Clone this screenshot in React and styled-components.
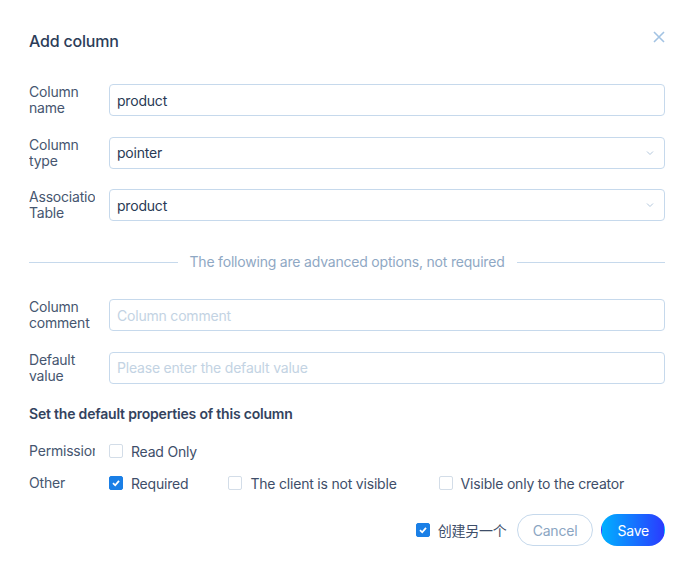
import React from "react";
import styled, { createGlobalStyle } from "styled-components";

const Global = createGlobalStyle`
  body {
    margin: 0;
    background: #fff;
    font-family: Inter, "Noto Sans", "Noto Sans CJK SC", sans-serif;
    letter-spacing: -0.2px;
  }
`;

const Dialog = styled.div`
  width: 693px;
  box-sizing: border-box;
  padding: 30px 28px 0 29px;
  background: #fff;
  color: #3b4b66;
`;

const Header = styled.div`
  display: flex;
  justify-content: space-between;
  align-items: flex-start;
  height: 22px;
`;

const Title = styled.h2`
  margin: 0;
  font-size: 16px;
  font-weight: 500;
  line-height: 22px;
  color: #2c3d59;
`;

const Close = styled.button`
  border: none;
  background: none;
  padding: 0;
  margin: 0 -1px 0 0;
  width: 14px;
  height: 14px;
  display: flex;
  align-items: center;
  justify-content: center;
`;

const Form = styled.div`
  margin-top: 32px;
  display: flex;
  flex-direction: column;
`;

const Row = styled.div`
  display: flex;
  align-items: center;
  margin-bottom: ${(p) => p.$gap ?? 20.5}px;
`;

const Label = styled.div`
  width: 66px;
  margin-right: 14px;
  flex-shrink: 0;
  font-size: 14px;
  line-height: 16px;
  color: #46566f;
  overflow: hidden;
  white-space: ${(p) => (p.$nowrap ? "nowrap" : "normal")};
`;

const Field = styled.div`
  position: relative;
  flex: 1;
  height: 32px;
  box-sizing: border-box;
  border: 1px solid #c6d9ec;
  border-radius: 4px;
  display: flex;
  align-items: center;
  padding: 0 7px;
  font-size: 14px;
  color: ${(p) => (p.$placeholder ? "#c3d3e3" : "#2a3a55")};
`;

const Chevron = styled.svg`
  position: absolute;
  right: 10px;
  top: 12px;
`;

const Divider = styled.div`
  display: flex;
  align-items: center;
  gap: 12px;
  margin: 33px 0 29px;
  font-size: 14px;
  line-height: 16px;
  color: #8fa8c4;
  white-space: nowrap;
  &::before,
  &::after {
    content: "";
    flex: 1;
    height: 1px;
    background: #c6d9ec;
  }
`;

const Section = styled.div`
  font-size: 14px;
  font-weight: 600;
  line-height: 20px;
  color: #33435e;
  margin-bottom: 11px;
`;

const CheckRow = styled.div`
  display: flex;
  align-items: center;
  height: 32px;
`;

const Option = styled.label`
  display: flex;
  align-items: center;
  flex-shrink: 0;
  white-space: nowrap;
  gap: 8px;
  margin-right: ${(p) => p.$space ?? 40}px;
  font-size: 14px;
  color: #3e4e69;
`;

const Box = styled.span`
  width: 14px;
  height: 14px;
  box-sizing: border-box;
  border-radius: 2px;
  border: 1px solid ${(p) => (p.$on ? "#1a7fe6" : "#d3dde8")};
  background: ${(p) => (p.$on ? "#1a7fe6" : "#fff")};
  display: flex;
  align-items: center;
  justify-content: center;
`;

const Footer = styled.div`
  display: flex;
  justify-content: flex-end;
  align-items: center;
  gap: 8px;
  margin-top: 15px;
`;

const Button = styled.button`
  height: 32px;
  border-radius: 16px;
  font-family: inherit;
  letter-spacing: inherit;
  font-size: 14px;
  padding: 0 15px;
  border: 1px solid ${(p) => (p.$primary ? "transparent" : "#c6d9ec")};
  color: ${(p) => (p.$primary ? "#fff" : "#8ba5c2")};
  background: ${(p) =>
    p.$primary ? "linear-gradient(90deg, #00b0ff 0%, #2a3bff 100%)" : "#fff"};
`;

const Check = ({ on }) => (
  <Box $on={on}>
    {on && (
      <svg width="10" height="10" viewBox="0 0 10 10">
        <path d="M2 5.2 L4.2 7.3 L8 2.8" stroke="#fff" strokeWidth="1.8" fill="none" />
      </svg>
    )}
  </Box>
);

const Down = () => (
  <Chevron width="8" height="6" viewBox="0 0 8 6">
    <path d="M1 1.5 L4 4.5 L7 1.5" stroke="#b3c7dc" strokeWidth="1" fill="none" />
  </Chevron>
);

export default function App() {
  return (
    <>
      <Global />
      <Dialog>
        <Header>
          <Title>Add column</Title>
          <Close>
            <svg width="12" height="12" viewBox="0 0 12 12">
              <path d="M1 1 L11 11 M11 1 L1 11" stroke="#a3c3e3" strokeWidth="1.6" />
            </svg>
          </Close>
        </Header>
        <Form>
          <Row>
            <Label>Column name</Label>
            <Field>product</Field>
          </Row>
          <Row>
            <Label>Column type</Label>
            <Field>
              pointer
              <Down />
            </Field>
          </Row>
          <Row $gap={0}>
            <Label>Association Table</Label>
            <Field>
              product
              <Down />
            </Field>
          </Row>
          <Divider>The following are advanced options, not required</Divider>
          <Row>
            <Label>Column comment</Label>
            <Field $placeholder>Column comment</Field>
          </Row>
          <Row>
            <Label>Default value</Label>
            <Field $placeholder>Please enter the default value</Field>
          </Row>
          <Section>Set the default properties of this column</Section>
          <CheckRow>
            <Label $nowrap>Permission</Label>
            <Option>
              <Check />
              Read Only
            </Option>
          </CheckRow>
          <CheckRow>
            <Label>Other</Label>
            <Option>
              <Check on />
              Required
            </Option>
            <Option $space={42}>
              <Check />
              The client is not visible
            </Option>
            <Option>
              <Check />
              Visible only to the creator
            </Option>
          </CheckRow>
          <Footer>
            <Option $space={2}>
              <Check on />
              创建另一个
            </Option>
            <Button>Cancel</Button>
            <Button $primary>Save</Button>
          </Footer>
        </Form>
      </Dialog>
    </>
  );
}
